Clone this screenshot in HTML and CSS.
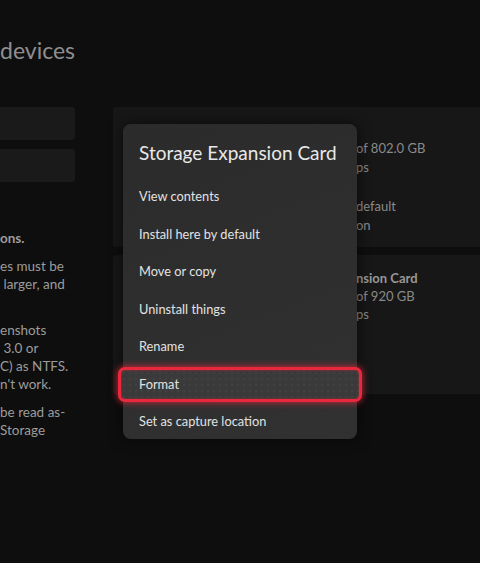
FILE: index.html
```html
<!DOCTYPE html>
<html lang="en">
<head>
  <meta charset="UTF-8" />
  <meta name="viewport" content="width=device-width, initial-scale=1" />
  <title>Storage devices</title>
  <link rel="stylesheet" href="styles.css">
</head>
<body>
  <div class="page">
    <h1 class="page-title">devices</h1>

    <div class="content">
      <div class="side">
        <div class="tile"></div>
        <div class="tile"></div>

        <div class="notes">
          <p class="bold">ons.</p>
          <p>es must be<br>&nbsp;larger, and<br>&nbsp;</p>
          <p>enshots<br>&nbsp;3.0 or<br>C) as NTFS.<br>n't work.</p>
          <p>be read as-<br>Storage</p>
        </div>
      </div>

      <div class="drives">
        <div class="drive drive-internal">
          <p>of 802.0 GB</p>
          <p>ps</p>
          <p class="gap">default</p>
          <p>on</p>
        </div>
        <div class="drive drive-card">
          <p class="bold">nsion Card</p>
          <p>of 920 GB</p>
          <p>ps</p>
        </div>
      </div>
    </div>

    <div class="menu">
      <h2 class="menu-title">Storage Expansion Card</h2>
      <ul class="menu-list">
        <li class="menu-item"><span>View contents</span></li>
        <li class="menu-item"><span>Install here by default</span></li>
        <li class="menu-item"><span>Move or copy</span></li>
        <li class="menu-item"><span>Uninstall things</span></li>
        <li class="menu-item"><span>Rename</span></li>
        <li class="menu-item focused"><span>Format</span></li>
        <li class="menu-item"><span>Set as capture location</span></li>
      </ul>
    </div>
  </div>
</body>
</html>
```

FILE: styles.css
```css
body {
  margin: 0;
  background-color: #0e0e0e;
  font-family: Lato, 'Noto Sans', sans-serif;
  color: #9a9a9a;
  overflow: hidden;
}

.page {
  position: relative;
  width: 480px;
  height: 563px;
  overflow: hidden;
}

.page-title {
  margin: 0;
  padding-top: 36px;
  font-size: 23px;
  font-weight: 400;
  line-height: 28px;
  color: #8e8e8e;
}

.content {
  display: flex;
  gap: 38px;
  margin-top: 43px;
}

.side {
  width: 75px;
  flex-shrink: 0;
}

.tile {
  height: 33px;
  background-color: #1a1a1a;
  border-radius: 0 3px 3px 0;
  margin-bottom: 9px;
}

.notes {
  margin-top: 47px;
  font-size: 13.5px;
  line-height: 18px;
  white-space: nowrap;
  color: #9c9c9c;
}

.notes p {
  margin: 0 0 10px;
}

.bold {
  font-weight: 700;
}

.drives {
  flex-grow: 1;
  display: flex;
  flex-direction: column;
  gap: 8px;
}

.drive {
  background-color: #171717;
  border-radius: 3px 0 0 3px;
  padding-left: 243px;
  font-size: 13px;
  white-space: nowrap;
  color: #8a8a8a;
  box-sizing: border-box;
}

.drive p {
  margin: 0;
}

.drive-internal {
  height: 140px;
  padding-top: 32px;
  line-height: 19px;
}

.drive-internal .gap {
  margin-top: 20px;
}

.drive-card {
  height: 139px;
  padding-top: 14px;
  line-height: 18px;
}

.drive-card .bold {
  color: #989898;
}

/* context menu overlay */
.menu {
  position: absolute;
  left: 123px;
  top: 124px;
  width: 234px;
  height: 315px;
  background: linear-gradient(160deg, #2b2b2b, #313131);
  border-radius: 8px;
  box-shadow: 0 0 14px rgba(0, 0, 0, 0.6);
}

.menu-title {
  margin: 0;
  padding: 16px 16px 0;
  font-size: 19px;
  font-weight: 400;
  line-height: 25px;
  height: 38px;
  color: #e8e8e8;
}

.menu-list {
  list-style: none;
  margin: 0;
  padding: 0;
}

.menu-item {
  position: relative;
  height: 37.5px;
  line-height: 37.5px;
  padding-left: 16px;
  font-size: 12.8px;
  color: #e2e2e2;
}

.menu-item span {
  position: relative;
}

.menu-item.focused::before {
  content: '';
  position: absolute;
  left: -5px;
  right: -5px;
  top: 1px;
  bottom: 1px;
  border: 3px solid #e8293d;
  border-radius: 7px;
  background-color: #3a3a3a;
  background-image: radial-gradient(circle, #4a4a4a 0.6px, transparent 0.8px);
  background-size: 6px 6px;
  box-shadow: 0 0 6px 1px rgba(232, 41, 61, 0.7), inset 0 0 3px rgba(232, 41, 61, 0.5);
}
```
